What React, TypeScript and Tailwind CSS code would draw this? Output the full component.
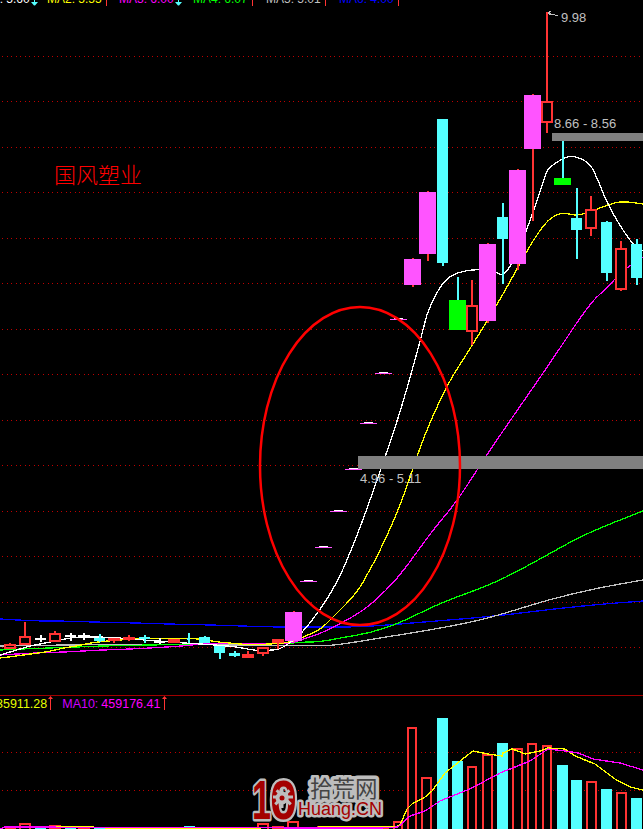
import React from 'react';

const RED = '#ff3333';
const CYAN = '#54ffff';
const PINK = '#ff54ff';
const GREEN = '#00ff00';

// x1, x2, top, bottom, wick top, wick bottom, kind
type Candle = [number, number, number, number, number, number, string];

const candles: Candle[] = [
  [4, 16, 644, 649, 643, 649, 'hollow'],
  [19, 31, 636, 645, 622, 645, 'hollow'],
  [35, 46, 638, 640, 635, 642, 'white'],
  [49, 61, 633, 642, 631, 642, 'hollow'],
  [65, 76, 635, 637, 633, 641, 'white'],
  [78, 90, 635, 637, 633, 640, 'white'],
  [94, 105, 638, 641, 634, 642, 'cyan'],
  [108, 120, 638, 641, 638, 643, 'hollow'],
  [123, 135, 637, 640, 635, 641, 'hollow'],
  [139, 150, 637, 639, 635, 643, 'cyan'],
  [154, 165, 641, 643, 638, 644, 'white'],
  [168, 180, 639, 643, 639, 643, 'hollow'],
  [187, 190, 638, 640, 633, 643, 'cyan'],
  [199, 210, 637, 643, 636, 643, 'cyan'],
  [214, 225, 646, 653, 646, 659, 'cyan'],
  [229, 240, 653, 656, 651, 657, 'cyan'],
  [242, 254, 654, 658, 651, 658, 'red'],
  [257, 269, 647, 654, 647, 656, 'hollow'],
  [272, 284, 639, 643, 639, 649, 'hollow'],
  [285, 302, 612, 641, 611, 641, 'pink'],
  [404, 421, 259, 285, 258, 287, 'pink'],
  [419, 436, 192, 254, 191, 261, 'pink'],
  [437, 448, 119, 263, 119, 266, 'cyan'],
  [449, 466, 300, 330, 277, 330, 'green'],
  [466, 478, 305, 332, 280, 345, 'hollow'],
  [479, 496, 244, 321, 243, 323, 'pink'],
  [497, 508, 217, 239, 203, 284, 'cyan'],
  [509, 526, 170, 264, 169, 270, 'pink'],
  [524, 541, 95, 149, 94, 221, 'pink'],
  [541, 553, 101, 123, 12, 133, 'hollow'],
  [554, 571, 178, 185, 141, 185, 'green'],
  [571, 582, 218, 230, 188, 259, 'cyan'],
  [585, 597, 209, 229, 196, 236, 'hollow'],
  [601, 612, 222, 273, 221, 281, 'cyan'],
  [615, 627, 248, 290, 241, 291, 'hollow'],
  [631, 642, 244, 278, 239, 285, 'cyan'],
];

// the thin flat days inside the circle
const dashes = [
  [390, 319],
  [375, 373],
  [360, 423],
  [345, 469],
  [330, 511],
  [315, 547],
  [300, 581],
];

const maLines = [
  {
    color: '#0000ff',
    points:
      '0,619 33,621 63,621 92,622 137,623 167,624 212,625 242,626 272,627 320,627 363,627 437,621 497,616 553,609 603,604 643,601',
  },
  {
    color: '#c0c0c0',
    points: '0,646 67,645 133,644 233,645 320,646 337,645 387,637 453,626 493,617 547,600 597,588 643,580',
  },
  {
    color: GREEN,
    points:
      '0,650 20,649 50,648 77,647 100,646 150,645 200,644 233,643 283,644 302,642 320,642 340,638 370,633 400,623 440,603 490,585 520,570 547,555 587,533 643,511',
  },
  {
    color: '#ff00ff',
    points:
      '0,655 33,653 67,652 100,650 133,649 167,647 183,646 200,644 233,643 290,644 303,639 320,634 353,617 373,603 398,578 417,552 433,530 458,500 480,465 505,428 530,392 552,360 590,303 607,288 623,270 643,257',
  },
  {
    color: '#ffff00',
    points:
      '0,658 10,657 30,654 47,652 63,648 77,646 90,643 107,641 133,639 183,638 200,639 217,642 230,643 250,645 290,643 303,637 320,630 333,617 357,593 368,573 377,557 400,507 418,453 432,417 450,380 463,360 497,305 518,267 532,242 548,219 563,212 575,216 590,212 607,205 622,201 643,204',
  },
  {
    color: '#ffffff',
    points:
      '0,655 10,652 20,649 30,646 40,644 50,642 60,640 70,638 80,637 110,637 167,642 217,645 237,647 247,649 260,651 273,650 280,649 290,643 302,633 320,610 337,583 350,553 363,520 383,463 400,413 415,360 423,330 428,310 443,281 458,272 478,269 497,272 502,276 512,265 527,230 545,177 548,168 565,157 575,156 590,163 598,180 607,203 622,229 635,247 643,251',
  },
];

const gridLines = [56, 101, 147, 192, 238, 283, 329, 374, 420, 465, 511, 556, 602, 647];

// x1, x2, top, kind
const volumeBars: [number, number, number, string][] = [
  [5, 16, 825, 'red'],
  [19, 31, 822, 'hollow'],
  [35, 46, 827, 'cyan'],
  [49, 61, 824, 'red'],
  [65, 76, 827, 'cyan'],
  [78, 90, 826, 'red'],
  [94, 105, 827, 'cyan'],
  [108, 120, 826, 'red'],
  [123, 135, 827, 'red'],
  [139, 150, 827, 'cyan'],
  [154, 165, 827, 'cyan'],
  [168, 180, 827, 'red'],
  [184, 195, 825, 'cyan'],
  [199, 210, 826, 'cyan'],
  [214, 225, 826, 'cyan'],
  [229, 240, 826, 'cyan'],
  [242, 254, 826, 'red'],
  [257, 269, 822, 'hollow'],
  [272, 284, 825, 'red'],
  [287, 299, 820, 'hollow'],
  [302, 314, 826, 'red'],
  [317, 329, 825, 'red'],
  [332, 344, 825, 'red'],
  [347, 359, 826, 'red'],
  [362, 374, 825, 'red'],
  [377, 389, 825, 'red'],
  [393, 403, 820, 'hollow'],
  [407, 417, 726, 'hollow'],
  [421, 432, 776, 'hollow'],
  [437, 448, 717, 'cyan'],
  [452, 463, 760, 'cyan'],
  [467, 477, 765, 'hollow'],
  [482, 493, 753, 'hollow'],
  [497, 508, 742, 'cyan'],
  [512, 523, 747, 'hollow'],
  [527, 537, 742, 'hollow'],
  [542, 552, 744, 'hollow'],
  [557, 568, 764, 'cyan'],
  [571, 582, 779, 'cyan'],
  [586, 597, 780, 'hollow'],
  [601, 612, 788, 'cyan'],
  [616, 627, 791, 'hollow'],
  [631, 642, 797, 'cyan'],
];

const fillOf: Record<string, string> = {
  cyan: CYAN,
  pink: PINK,
  green: GREEN,
  red: RED,
  white: '#ffffff',
};

// rounds the corners so the averages read as curves
function smoothPath(points: string) {
  const pts = points.split(' ').map((p) => p.split(',').map(Number));
  let d = `M${pts[0][0]} ${pts[0][1]}`;
  for (let i = 1; i < pts.length - 1; i++) {
    const mx = (pts[i][0] + pts[i + 1][0]) / 2;
    const my = (pts[i][1] + pts[i + 1][1]) / 2;
    d += ` Q${pts[i][0]} ${pts[i][1]} ${mx} ${my}`;
  }
  const last = pts[pts.length - 1];
  return `${d} L${last[0]} ${last[1]}`;
}

function CandleShape({ c }: { c: Candle }) {
  const [x1, x2, top, bottom, wickTop, wickBottom, kind] = c;
  const mid = Math.round((x1 + x2) / 2) - 1;
  const wickColor = kind === 'white' ? '#ffffff' : kind === 'cyan' || kind === 'green' ? CYAN : RED;

  if (kind === 'hollow') {
    return (
      <g>
        <rect x={mid} y={wickTop} width={2} height={top - wickTop} fill={RED} />
        <rect x={mid} y={bottom} width={2} height={Math.max(wickBottom - bottom, 0)} fill={RED} />
        <rect x={x1 + 1} y={top + 1} width={x2 - x1 - 2} height={bottom - top - 2} fill="#000" stroke={RED} strokeWidth={2} />
      </g>
    );
  }
  return (
    <g>
      <rect x={mid} y={wickTop} width={2} height={wickBottom - wickTop} fill={wickColor} />
      <rect x={x1} y={top} width={x2 - x1} height={bottom - top} fill={fillOf[kind]} />
    </g>
  );
}

function MainChart() {
  return (
    <svg width="643" height="695" viewBox="0 0 643 695" className="absolute inset-0 block">
      {gridLines.map((y) => (
        <line key={y} x1="2" x2="643" y1={y + 0.5} y2={y + 0.5} stroke="#c00000" strokeDasharray="1 3.55" shapeRendering="crispEdges" />
      ))}

      {maLines.map((l) => (
        <path key={l.color} d={smoothPath(l.points)} fill="none" stroke={l.color} strokeWidth="1.3" shapeRendering="crispEdges" />
      ))}

      {candles.map((c, i) => (
        <CandleShape key={i} c={c} />
      ))}

      {dashes.map(([x, y]) => (
        <g key={y}>
          <rect x={x} y={y} width="17" height="1" fill={PINK} />
          <rect x={x + 4} y={y - 1} width="9" height="1" fill="#ffffff" />
        </g>
      ))}

      <rect x="552" y="133" width="91" height="8" fill="#808080" />
      <rect x="358" y="456" width="285" height="13" fill="#808080" />

      <polyline points="558,16 548,13 551,11 548,13 551,15" fill="none" stroke="#c0c0c0" strokeWidth="1" shapeRendering="crispEdges" />

      <ellipse cx="360" cy="466" rx="100" ry="159" fill="none" stroke="#ff0000" strokeWidth="2.5" />
    </svg>
  );
}

function VolumeChart() {
  return (
    <svg width="643" height="134" viewBox="0 695 643 134" className="absolute inset-0 block">
      {[751, 789].map((y) => (
        <line key={y} x1="2" x2="643" y1={y + 0.5} y2={y + 0.5} stroke="#c00000" strokeDasharray="1 3.55" shapeRendering="crispEdges" />
      ))}
      {volumeBars.map(([x1, x2, top, kind], i) =>
        kind === 'hollow' ? (
          <rect key={i} x={x1 + 1} y={top + 1} width={x2 - x1 - 2} height={840 - top} fill="#000" stroke={RED} strokeWidth="2" />
        ) : (
          <rect key={i} x={x1} y={top} width={x2 - x1} height={840 - top} fill={fillOf[kind]} />
        ),
      )}
      <polyline
        points="33,826 92,826 122,828 182,828 250,827 330,826 395,826 400,824 407,808 412,803 425,796 432,790 445,772 460,760 473,750 488,753 502,755 503,752 512,748 518,750 525,753 540,750 548,747 565,748 575,755 595,763 615,778 630,786 643,789"
        fill="none"
        stroke="#ffff00"
        strokeWidth="1.3"
        shapeRendering="crispEdges"
      />
      <polyline
        points="0,828 5,826 330,827 380,827 398,826 410,815 425,810 440,800 470,788 500,772 530,760 548,748 565,750 578,752 593,758 620,762 643,769"
        fill="none"
        stroke="#ff00ff"
        strokeWidth="1.3"
        shapeRendering="crispEdges"
      />
    </svg>
  );
}

// red tick between legend items
function Tick() {
  return <span className="ml-[4px] mt-[8px] h-[6px] w-[1px] shrink-0 bg-[#ff3333]" />;
}

function DownArrow() {
  return (
    <svg width="7" height="7" viewBox="0 0 7 7" className="ml-[1px] mt-[7px] shrink-0">
      <path d="M3 0h1v3h3L4 6.500h-1L0 3h3z" fill="#54ffff" />
    </svg>
  );
}

function UpArrow() {
  return (
    <svg width="7" height="14" viewBox="0 0 7 14" className="shrink-0">
      <path d="M3 14V3H1L3.500 0L6 3H4v11z" fill="#ff3333" />
    </svg>
  );
}

function Watermark() {
  const gear = [0, 45, 90, 135];
  return (
    <svg width="140" height="54" viewBox="0 0 140 54" className="absolute left-[249px] top-[79px]">
      <g style={{ paintOrder: 'stroke' }} stroke="#bdbdbd" strokeLinejoin="round">
        <text x="61" y="22" strokeWidth="7" fontFamily="'Noto Sans CJK SC', sans-serif" fontSize="22.5" fill="#444444">
          拾荒网
        </text>
        <text x="3" y="44" strokeWidth="5" fontFamily="'Liberation Sans', sans-serif" fontWeight="700" fontSize="56" fill="#a40000" textLength="19" lengthAdjust="spacingAndGlyphs">
          1
        </text>
        <text x="21" y="44" strokeWidth="5" fontFamily="'Liberation Sans', sans-serif" fontWeight="700" fontSize="56" fill="#a40000" textLength="27" lengthAdjust="spacingAndGlyphs">
          0
        </text>
        <text x="49" y="40" strokeWidth="5" fontFamily="'Liberation Sans', sans-serif" fontSize="18" fill="#a40000" textLength="84" lengthAdjust="spacingAndGlyphs">
          Huang.CN
        </text>
      </g>
      {gear.map((a) => (
        <rect key={a} x="31.500" y="13" width="3" height="20" fill="#bdbdbd" transform={`rotate(${a} 34 23)`} />
      ))}
      <circle cx="33" cy="23" r="6.500" fill="#bdbdbd" />
      <circle cx="33" cy="23" r="2.500" fill="#a40000" />
    </svg>
  );
}

export default function App() {
  return (
    <div className="flex h-[829px] w-[643px] flex-col overflow-hidden bg-black" style={{ fontFamily: "'Liberation Sans', sans-serif" }}>
      <div className="relative h-[695px] shrink-0">
        <MainChart />

        <div className="absolute left-[-25px] top-[-8px] flex text-[12px] leading-[14px] whitespace-nowrap">
          <div className="flex w-[72px]">
            <span className="text-[#ffffff]">MA1: 5.60</span>
            <DownArrow />
          </div>
          <div className="flex w-[72px]">
            <span className="text-[#ffff00]">MA2: 5.55</span>
            <Tick />
          </div>
          <div className="flex w-[74px]">
            <span className="text-[#ff00ff]">MA3: 6.00</span>
            <DownArrow />
          </div>
          <div className="flex w-[73px]">
            <span className="text-[#00ff00]">MA4: 6.07</span>
            <Tick />
          </div>
          <div className="flex w-[73px]">
            <span className="text-[#c0c0c0]">MA5: 5.01</span>
            <Tick />
          </div>
          <div className="flex w-[73px]">
            <span className="text-[#0000ff]">MA6: 4.00</span>
            <Tick />
          </div>
        </div>

        <span className="absolute left-[54px] top-[158px] text-[22px] leading-[30px] text-[#ff0000]" style={{ fontFamily: "'Noto Sans CJK SC', sans-serif", fontWeight: 300 }}>
          国风塑业
        </span>
        <span className="absolute left-[561px] top-[11px] text-[13px] leading-[14px] text-[#c0c0c0]">9.98</span>
        <span className="absolute left-[554px] top-[117px] text-[13px] leading-[14px] text-[#c0c0c0]">8.66 - 8.56</span>
        <span className="absolute left-[360px] top-[472px] text-[13px] leading-[14px] text-[#c0c0c0]">4.96 - 5.11</span>
      </div>

      <div className="relative h-[134px] shrink-0 border-t border-[#a00000]">
        <VolumeChart />
        <Watermark />
        <div className="absolute left-[-4px] top-[0px] flex items-start text-[12.5px] leading-[16px] whitespace-nowrap">
          <span className="text-[#e6ff00]">35911.28</span>
          <UpArrow />
          <span className="ml-[8px] text-[#d000ff]">MA10: </span>
          <span className="ml-[3px] text-[#ff00ff]">459176.41</span>
          <span className="ml-[1px]">
            <UpArrow />
          </span>
        </div>
      </div>
    </div>
  );
}
